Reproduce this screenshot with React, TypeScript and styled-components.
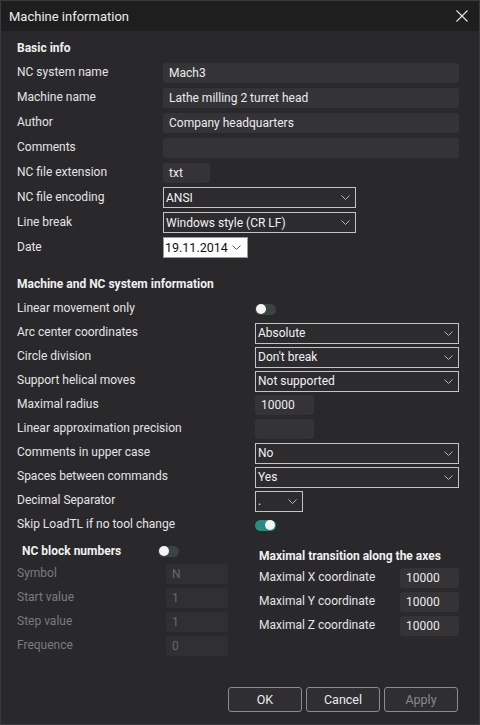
import React from "react";
import styled, { createGlobalStyle } from "styled-components";

const Global = createGlobalStyle`
  html, body { margin: 0; padding: 0; background: #29292b; }
  * { box-sizing: border-box; }
  body { font-family: Roboto, "Noto Sans", Arial, sans-serif; font-size: 12px; color: #e4e4e4; }
`;

const Window = styled.div`
  width: 480px;
  height: 725px;
  background: #29292b;
  border: 1px solid #3a3a3c;
  border-top: none;
  display: flex;
  flex-direction: column;
  position: relative;
`;

const TitleBar = styled.div`
  height: 31px;
  background: #1e1e1f;
  display: flex;
  align-items: center;
  justify-content: space-between;
  padding: 0 10px 0 8px;
  font-size: 13px;
  color: #ececec;
  border-top: 1px solid #3a3a3c;
`;

const CloseBtn = styled.div`
  width: 14px;
  height: 14px;
  display: flex;
  align-items: center;
  justify-content: center;
`;

const Body = styled.div`
  flex: 1;
  padding: 7px 20px 0 16px;
  display: flex;
  flex-direction: column;
`;

const SectionTitle = styled.div<{ $indent?: number }>`
  font-weight: 700;
  height: 20px;
  line-height: 20px;
  padding-left: ${(p) => p.$indent ?? 0}px;
  color: #f0f0f0;
`;

const Grid = styled.div<{ $label: number; $row: number; $top?: number }>`
  display: grid;
  grid-template-columns: ${(p) => p.$label}px 1fr;
  grid-auto-rows: ${(p) => p.$row}px;
  align-items: center;
  margin-top: ${(p) => p.$top ?? 0}px;
`;

const Label = styled.div<{ $disabled?: boolean }>`
  color: ${(p) => (p.$disabled ? "#7b7b7d" : "#e4e4e4")};
  margin-top: -2px;
  white-space: nowrap;
`;

const Field = styled.div<{ $w?: number; $disabled?: boolean }>`
  height: 20px;
  width: ${(p) => (p.$w ? `${p.$w}px` : "100%")};
  background: ${(p) => (p.$disabled ? "#303032" : "#343436")};
  border-radius: 3px;
  padding: 0 6px;
  display: flex;
  align-items: center;
  color: ${(p) => (p.$disabled ? "#68686a" : "#ececec")};
`;

const SelectBox = styled.div<{ $w?: number }>`
  height: 21px;
  width: ${(p) => (p.$w ? `${p.$w}px` : "100%")};
  background: #2c2c2e;
  border: 1px solid #c4c4c4;
  padding: 0 5px 0 2px;
  display: flex;
  align-items: center;
  justify-content: space-between;
  color: #f2f2f2;
`;

const DateBox = styled.div`
  height: 21px;
  width: 85px;
  background: #ffffff;
  border: 1px solid #9a9a9a;
  padding: 0 6px 0 1px;
  display: flex;
  align-items: center;
  justify-content: space-between;
  color: #111;
  font-size: 12.5px;
`;

const Toggle = styled.div<{ $on?: boolean }>`
  width: 21px;
  height: 11px;
  border-radius: 6px;
  background: ${(p) => (p.$on ? "#278c82" : "#3a4543")};
  position: relative;
  &::after {
    content: "";
    position: absolute;
    top: 0.5px;
    left: ${(p) => (p.$on ? "10px" : "0.5px")};
    width: 10px;
    height: 10px;
    border-radius: 50%;
    background: #f4f4f4;
  }
`;

const Bottom = styled.div`
  display: grid;
  grid-template-columns: 242px 1fr;
  margin-top: 2px;
`;

const LeftHeader = styled.div`
  display: grid;
  grid-template-columns: 136px 1fr;
  align-items: center;
  height: 24px;
  padding-left: 5px;
`;

const RightHeader = styled.div`
  height: 24px;
  display: flex;
  align-items: flex-end;
  padding-bottom: 0px;
  font-weight: 700;
  color: #f0f0f0;
`;

const Footer = styled.div`
  display: flex;
  justify-content: flex-end;
  gap: 4px;
  padding: 0 21px 12px 0;
`;

const Button = styled.div<{ $disabled?: boolean }>`
  width: 74px;
  height: 25px;
  border: 1px solid #8c8c8e;
  border-radius: 3px;
  background: #2f2f31;
  display: flex;
  align-items: center;
  justify-content: center;
  color: ${(p) => (p.$disabled ? "#8a8a8c" : "#ececec")};
  font-size: 12.5px;
`;

const Spacer = styled.div`
  flex: 1;
`;

const Chevron = ({ color = "#b8b8b8" }: { color?: string }) => (
  <svg width="9" height="5" viewBox="0 0 9 5">
    <polyline points="0.5,0.5 4.5,4.5 8.5,0.5" fill="none" stroke={color} strokeWidth="1" />
  </svg>
);

const Select = ({ value, w }: { value: string; w?: number }) => (
  <SelectBox $w={w}>
    <span>{value}</span>
    <Chevron />
  </SelectBox>
);

export default function App() {
  return (
    <>
      <Global />
      <Window>
        <TitleBar>
          <span>Machine information</span>
          <CloseBtn>
            <svg width="12" height="12" viewBox="0 0 12 12">
              <line x1="0.5" y1="0.5" x2="11.5" y2="11.5" stroke="#e6e6e6" strokeWidth="1.1" />
              <line x1="11.5" y1="0.5" x2="0.5" y2="11.5" stroke="#e6e6e6" strokeWidth="1.1" />
            </svg>
          </CloseBtn>
        </TitleBar>
        <Body>
          <SectionTitle>Basic info</SectionTitle>
          <Grid $label={146} $row={25} $top={2}>
            <Label>NC system name</Label>
            <Field>Mach3</Field>
            <Label>Machine name</Label>
            <Field>Lathe milling 2 turret head</Field>
            <Label>Author</Label>
            <Field>Company headquarters</Field>
            <Label>Comments</Label>
            <Field />
            <Label>NC file extension</Label>
            <Field $w={47}>txt</Field>
            <Label>NC file encoding</Label>
            <Select value="ANSI" w={193} />
            <Label>Line break</Label>
            <Select value="Windows style (CR LF)" w={193} />
            <Label>Date</Label>
            <DateBox>
              <span>19.11.2014</span>
              <Chevron color="#555" />
            </DateBox>
          </Grid>
          <SectionTitle style={{ marginTop: 14 }}>Machine and NC system information</SectionTitle>
          <Grid $label={238} $row={24} $top={3}>
            <Label>Linear movement only</Label>
            <Toggle />
            <Label>Arc center coordinates</Label>
            <Select value="Absolute" />
            <Label>Circle division</Label>
            <Select value="Don't break" />
            <Label>Support helical moves</Label>
            <Select value="Not supported" />
            <Label>Maximal radius</Label>
            <Field $w={59}>10000</Field>
            <Label>Linear approximation precision</Label>
            <Field $w={59} />
            <Label>Comments in upper case</Label>
            <Select value="No" />
            <Label>Spaces between commands</Label>
            <Select value="Yes" />
            <Label>Decimal Separator</Label>
            <Select value="." w={48} />
            <Label>Skip LoadTL if no tool change</Label>
            <Toggle $on />
          </Grid>
          <Bottom>
            <div>
              <LeftHeader>
                <SectionTitle>NC block numbers</SectionTitle>
                <Toggle />
              </LeftHeader>
              <Grid $label={149} $row={24} $top={-1}>
                <Label $disabled>Symbol</Label>
                <Field $disabled $w={62}>N</Field>
                <Label $disabled>Start value</Label>
                <Field $disabled $w={62}>1</Field>
                <Label $disabled>Step value</Label>
                <Field $disabled $w={62}>1</Field>
                <Label $disabled>Frequence</Label>
                <Field $disabled $w={62}>0</Field>
              </Grid>
            </div>
            <div>
              <RightHeader>Maximal transition along the axes</RightHeader>
              <Grid $label={141} $row={24} $top={3}>
                <Label>Maximal X coordinate</Label>
                <Field $w={59}>10000</Field>
                <Label>Maximal Y coordinate</Label>
                <Field $w={59}>10000</Field>
                <Label>Maximal Z coordinate</Label>
                <Field $w={59}>10000</Field>
              </Grid>
            </div>
          </Bottom>
          <Spacer />
        </Body>
        <Footer>
          <Button>OK</Button>
          <Button>Cancel</Button>
          <Button $disabled>Apply</Button>
        </Footer>
      </Window>
    </>
  );
}
